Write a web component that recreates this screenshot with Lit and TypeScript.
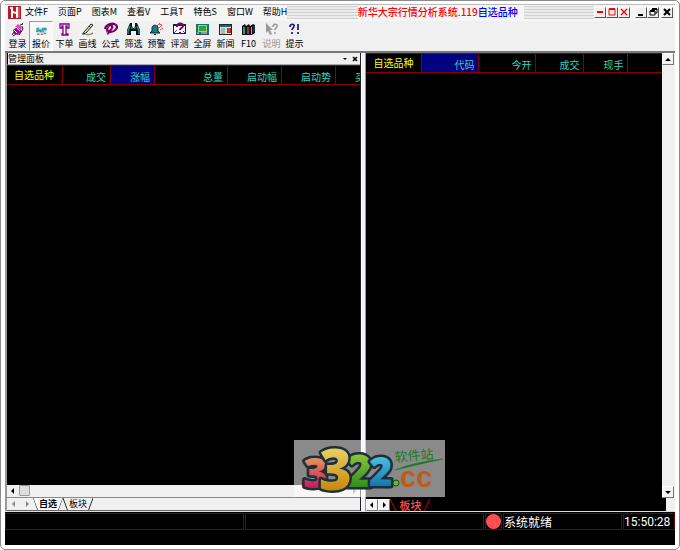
import { LitElement, html, css, svg } from "lit";
import { customElement } from "lit/decorators.js";
import { classMap } from "lit/directives/class-map.js";

interface Tool { label: string; icon: unknown; pressed?: boolean; disabled?: boolean }
interface Column { label: string; cls: string; kind?: string }

const MENUS = ["文件F", "页面P", "图表M", "查看V", "工具T", "特色S", "窗口W", "帮助H"];

const TOOLS: Tool[] = [
  { label: "登录", icon: svg`<path d="M2 13l2-3M11 3l2-2M3 14l3-2M10 3l3-1" stroke="#222" fill="none"/><path d="M3 8l4-3 5 4-4 4-4-1z" fill="#b0009c"/><path d="M5 5l3-3 4 3-1 3z" fill="#d24cc4"/><path d="M6 5l4 4M4 8l3 3" stroke="#fff"/><path d="M12 4l1 3-4 6" stroke="#222" fill="none"/>` },
  { label: "报价", pressed: true, icon: svg`<path d="M2 5h11v8H2z" fill="#bfe4e2"/><path d="M2 5h3v2h3v-2h5v3h-3v2H6V9H2z" fill="#2fb4b4"/><path d="M2 9h2M5 8l2 1M10 7l2-1M3 12h2M7 12h2M10 11h2" stroke="#e02a2a"/>` },
  { label: "下单", icon: svg`<path d="M3 2h9v4h-2V4H9v8h2v1H5v-1h1V4H5v2H3z" fill="#fff" stroke="#860086" stroke-width="1.3"/>` },
  { label: "画线", icon: svg`<path d="M4 10L11 2l2 1-7 8-3 1z" fill="#e6dcae" stroke="#222"/><path d="M9 4l2 2" stroke="#222"/><path d="M2 12c4-1 5 3 11-1" stroke="#303090" fill="none"/><path d="M5 12h6" stroke="#d8d040"/>` },
  { label: "公式", icon: svg`<path d="M2 7c1-5 8-7 11-4s-2 7-5 7-5-2-3-5 5-2 4 1-3 2-4 6" fill="none" stroke="#7a0064" stroke-width="2.2"/><path d="M3 8l2 5M3 6l3-2" stroke="#b0308c"/>` },
  { label: "筛选", icon: svg`<path d="M4 1h2v3l1 2h1l1-2V1h2l3 7v5h-4V9H5v4H1V8z" fill="#111"/><path d="M4 4L2 9v3M11 4l2 5v3M6 5v2M9 5v2" stroke="#18a0a0" stroke-width="1.3" fill="none"/>` },
  { label: "预警", icon: svg`<path d="M1 11l2-2V6c0-3 4-4 6-1v4l2 2z" fill="#148080" stroke="#123"/><path d="M5 12h2v1H5z" fill="#111"/><path d="M8 4l3-3M10 6l3-3M11 8l3-2M10 2l3 1" stroke="#e44"/>` },
  { label: "评测", icon: svg`<path d="M1 2h13v10H1z" fill="#222"/><path d="M2 4h11v7H2z" fill="#fff"/><path d="M5 5c0-5 7-4 6-1 0 2-3 2-3 4M8 10v2" stroke="#7a0078" stroke-width="2" fill="none"/><path d="M2 11l3-3M11 9l2 2" stroke="#34a"/>` },
  { label: "全屏", icon: svg`<path d="M1 2h13v10H1z" fill="#087878"/><path d="M3 3h9v7H3z" fill="#c9c45a"/><path d="M4 4h7v5H4z" fill="#24a552"/><path d="M2 11h2M6 11h6" stroke="#ddd"/><path d="M1 12h13v1H1z" fill="#444"/>` },
  { label: "新闻", icon: svg`<path d="M1 2h13v11H1z" fill="#222"/><path d="M2 5h11v7H2z" fill="#ddd"/><path d="M2 3h11v2H2z" fill="#087070"/><path d="M9 6h4v5H9z" fill="#b22"/><path d="M3 7h4M3 9h4M3 11h4M10 7h2M10 9h2" stroke="#888"/>` },
  { label: "F10", icon: svg`<path d="M1 4l3-2 1 2 3-2 1 2 3-2 2 1v8l-3 2H1z" fill="#111"/><path d="M2 5h2v7H2z" fill="#1a9a9a"/><path d="M6 5h2v7H6z" fill="#b03020"/><path d="M10 5h1v7h-1z" fill="#c9b52c"/><path d="M13 4v6" stroke="#249"/>` },
  { label: "说明", disabled: true, icon: svg`<path d="M2 1v10l2-2 2 4 2-1-2-4h3z" fill="#999"/><path d="M9 5c0-4 5-3 4-1 0 2-2 2-2 4M11 10v2" stroke="#999" stroke-width="1.5" fill="none"/>` },
  { label: "提示", icon: svg`<path d="M3 5c0-4 5-3 4-1 0 2-2 2-2 4M5 10v2M11 2v6M11 10v2" stroke="#14148c" stroke-width="1.7" fill="none"/>` },
];

const LEFT: Column[] = [
  { label: "自选品种", cls: "w56", kind: "name" },
  { label: "成交", cls: "w48" },
  { label: "涨幅", cls: "w44", kind: "sorted" },
  { label: "总量", cls: "w73" },
  { label: "启动幅", cls: "w54" },
  { label: "启动势", cls: "w54" },
  { label: "买入", cls: "w44" },
];

const RIGHT: Column[] = [
  { label: "自选品种", cls: "w56", kind: "name" },
  { label: "代码", cls: "w57", kind: "sorted" },
  { label: "今开", cls: "w57" },
  { label: "成交", cls: "w48" },
  { label: "现手", cls: "w44" },
];

const GLYPHS = {
  min: svg`<path d="M2 8h5" stroke="currentColor" stroke-width="2"/>`,
  max: svg`<path d="M2 2h6v6H2z" fill="none" stroke="currentColor"/><path d="M2 2h6" stroke="currentColor" stroke-width="2"/>`,
  restore: svg`<path d="M4 4V2h5v4H7M2 4h5v4H2z" fill="none" stroke="currentColor"/><path d="M4 2h5M2 4h5" stroke="currentColor" stroke-width="2"/>`,
  close: svg`<path d="M2 2l6 6M8 2l-6 6" stroke="currentColor" stroke-width="2"/>`,
  shut: svg`<path d="M3 3l4 4M7 3l-4 4" stroke="currentColor" stroke-width="1.6"/>`,
  bar: svg`<path d="M2 5h6" stroke="currentColor" stroke-width="2"/>`,
  thin: svg`<path d="M2 2l6 6M8 2l-6 6" stroke="currentColor" stroke-width="1.4"/>`,
  left: svg`<path d="M6 2v6L3 5z" fill="currentColor"/>`,
  right: svg`<path d="M4 2v6l3-3z" fill="currentColor"/>`,
  up: svg`<path d="M2 7h6L5 4z" fill="currentColor"/>`,
  down: svg`<path d="M2 4h6L5 7z" fill="currentColor"/>`,
  drop: svg`<path d="M3 4h4L5 6z" fill="currentColor"/>`,
};

@customElement("app-root")
export class AppRoot extends LitElement {
  static styles = css`
    :host {
      display: block;
      height: 100vh;
      font-family: "Liberation Sans", "Noto Sans CJK SC", sans-serif;
      font-size: 9px;
      color: #000;
    }
    * { box-sizing: border-box; }
    button {
      font: inherit;
      color: inherit;
      background: none;
      border: 0;
      padding: 0;
      margin: 0;
      white-space: nowrap;
      display: flex;
      align-items: center;
      justify-content: center;
    }
    .window {
      height: 100%;
      display: flex;
      flex-direction: column;
      padding: 3px 4px 4px;
      border: 1px solid #8c8c8c;
      border-radius: 5px;
      background: #fff;
    }
    .menubar {
      display: flex;
      align-items: center;
      height: 17px;
      background: #f6f6f6;
      border-top: 1px solid #bbb;
      padding: 0 2px 2px 3px;
    }
    .logo { width: 13px; height: 13px; flex: none; }
    .menus { display: flex; gap: 10px; padding-left: 4px; font-family: "Noto Sans CJK SC", sans-serif; line-height: 12px; }
    .hatch {
      flex: 1;
      height: 13px;
      background: repeating-linear-gradient(#d2d2d2 0 1px, #ececec 1px 3px);
    }
    .title { margin: 0; padding-right: 6px; font: 500 10px/12px "Noto Sans CJK SC", sans-serif; color: #f00; white-space: nowrap; }
    .title span { color: #00f; }
    .boxes { display: flex; }
    .boxes.system { color: #f00; margin-right: 5px; }
    .box {
      width: 12px;
      height: 11px;
      background: #f0f0f0;
      border: 1px solid;
      border-color: #fff #555 #555 #fff;
    }
    .box svg, .arrow svg { width: 10px; height: 10px; flex: none; display: block; }
    .last { margin-left: 2px; }
    .toolbar {
      display: flex;
      height: 30px;
      background: #f0f0f0;
      padding-left: 1px;
      font-family: "Noto Sans CJK SC", sans-serif;
    }
    .tool { flex: none; width: 23px; flex-direction: column; justify-content: flex-start; padding-top: 1px; line-height: 13px; }
    .tool svg { width: 15px; height: 15px; display: block; }
    .tool.pressed { width: 24px; border: 1px solid; border-color: #999 #fff #fff #999; background: #f8f8f8; }
    .tool.disabled { color: #999; }
    .work {
      position: relative;
      flex: 1;
      min-height: 0;
      display: grid;
      grid-template-columns: minmax(0, 357fr) 5px minmax(0, 309fr);
      border-top: 2px solid #777;
      border-bottom: 1px solid #ddd;
    }
    .pane { min-width: 0; min-height: 0; display: flex; flex-direction: column; background: #f0f0f0; }
    .left { border-left: 2px solid #999; border-right: 1px solid #222; }
    .splitter { background: #f0f3fa; border-left: 1px solid #fff; border-right: 1px solid #999; }
    .caption { display: flex; align-items: center; height: 12px; border-bottom: 1px solid #aaa; border-left: 1px solid #000; font-family: "Noto Sans CJK SC", sans-serif; }
    .caption h2 { flex: 1; margin: 0; font-size: 9px; font-weight: 400; line-height: 11px; }
    .arrow { width: 12px; height: 12px; flex: none; }
    .caption .arrow { width: 10px; height: 11px; }
    .quotes { flex: 1; min-height: 0; overflow: hidden; background: #000; border-top: 1px solid #800; }
    table { table-layout: fixed; width: 100%; border-collapse: separate; border-spacing: 0; }
    .quotes.wide table { width: 373px; }
    th {
      height: 19px;
      padding: 3px 4px 0 0;
      border-right: 1px solid #800;
      border-bottom: 1px solid #800;
      font: 400 10px/14px "Noto Sans CJK SC", sans-serif;
      color: #34d6bc;
      text-align: right;
      white-space: nowrap;
      overflow: hidden;
    }
    th.name { color: #ff0; padding: 0 8px 1px 0; }
    th.sorted { background: #000080; }
    th.rest { border-right: 0; }
    .w44 { width: 44px; } .w48 { width: 48px; } .w54 { width: 54px; }
    .w56 { width: 56px; } .w57 { width: 57px; } .w73 { width: 73px; }
    .hscroll { display: flex; height: 13px; border-bottom: 1px solid #888; background: #f0f0f0; }
    .thumb { width: 11px; height: 11px; background: #ddd; border: 1px solid #999; border-radius: 1px; }
    .grow { flex: 1; }
    .tabs { display: flex; align-items: center; height: 13px; border-bottom: 1px solid #666; }
    .muted { color: #888; }
    .left .tabs .arrow { width: 13px; }
    .tab { position: relative; height: 12px; padding: 0 6px; font-family: "Noto Sans CJK SC", sans-serif; line-height: 12px; }
    .slants { position: absolute; inset: 0; width: 100%; height: 100%; }
    .tab.active { background: #fff; font-weight: 700; clip-path: polygon(0 0, 100% 0, 86% 100%, 14% 100%); }
    .rightbody { flex: 1; min-height: 0; display: flex; }
    .vscroll { width: 13px; display: flex; flex-direction: column; justify-content: space-between; background: #f0f0f0; }
    .raised { background: #f4f4f4; border: 1px solid; border-color: #fff #777 #777 #fff; }
    .dark { background: #000; margin-right: 9px; border-bottom: 0; }
    .dark .tab { color: #ff5050; font-size: 11px; font-weight: 500; padding: 0 9px; }
    .watermark { position: absolute; left: calc(43% + 1px); bottom: 14px; width: 151px; height: 57px; background: rgba(255, 255, 255, 0.54); }
    .watermark svg { display: block; width: 100%; height: 100%; }
    .digit { font-family: "Open Sans", sans-serif; font-weight: 800; stroke: #1c2f3a; stroke-width: 5px; stroke-linejoin: round; paint-order: stroke; }
    .d1 { font-size: 42px; fill: url(#pink); }
    .d2 { font-size: 56px; fill: url(#gold); }
    .d3 { font-size: 45px; fill: url(#green); }
    .d4 { font-size: 40px; fill: url(#blue); }
    .cc { font: 700 29px "Liberation Sans", sans-serif; fill: #c05a14; }
    .site { font: 13px "Noto Sans CJK SC", sans-serif; fill: #1c7a1c; }
    .status {
      display: grid;
      grid-template-columns: minmax(0, 239fr) minmax(0, 239fr) 17px minmax(0, 119fr) 52px;
      gap: 1px;
      height: 33px;
      padding: 1px 0 15px;
      background: #000;
      color: #fff;
      font: 12px/15px "Noto Sans CJK SC", sans-serif;
    }
    .cell { border: 1px solid #700; white-space: nowrap; overflow: hidden; }
    .time { font-family: Roboto, sans-serif; line-height: 17px; }
    .lamp { width: 15px; height: 15px; border-radius: 50%; background: #ff5050; }
  `;

  private glyph(name: keyof typeof GLYPHS) {
    return html`<svg viewBox="0 0 10 10" aria-hidden="true">${GLYPHS[name]}</svg>`;
  }

  private box(name: keyof typeof GLYPHS, label: string, last = false) {
    return html`<button class=${classMap({ box: true, last })} aria-label=${label}>${this.glyph(name)}</button>`;
  }

  private arrow(name: keyof typeof GLYPHS, label: string, extra = "") {
    return html`<button class="arrow ${extra}" aria-label=${label}>${this.glyph(name)}</button>`;
  }

  private head(columns: Column[], rest = false) {
    return html`<table><thead><tr>
      ${columns.map((c) => html`<th scope="col" class="${c.cls} ${c.kind ?? ""}">${c.label}</th>`)}
      ${rest ? html`<th class="rest"></th>` : ""}
    </tr></thead></table>`;
  }

  private tab(label: string, color: string, active = false) {
    return html`<button class=${classMap({ tab: true, active })}>
      <svg class="slants" viewBox="0 0 34 12" preserveAspectRatio="none" aria-hidden="true"><path d="M0 0l5 12M34 0l-5 12" stroke=${color} fill="none"/></svg>${label}
    </button>`;
  }

  private gradient(id: string, from: string, to: string) {
    return svg`<linearGradient id=${id} x1="0" y1="0" x2="0" y2="1"><stop offset="0.25" stop-color=${from}/><stop offset="0.8" stop-color=${to}/></linearGradient>`;
  }

  render() {
    return html`
      <div class="window">
        <nav class="menubar">
          <svg class="logo" viewBox="0 0 13 13" aria-hidden="true"><path d="M0 0h13v13H0z" fill="#b81c22"/><path d="M2 1h3v4l3 1V1h2v11H8V8L5 7v5H3V3H2z" fill="#fff"/><path d="M11 1v11" stroke="#e88"/></svg>
          <div class="menus">${MENUS.map((m) => html`<button>${m}</button>`)}</div>
          <div class="hatch"></div>
          <h1 class="title">新华大宗行情分析系统.119<span>自选品种</span></h1>
          <div class="hatch"></div>
          <div class="boxes system">${this.box("bar", "最小化")}${this.box("max", "最大化")}${this.box("thin", "关闭")}</div>
          <div class="boxes">${this.box("min", "最小化页面")}${this.box("restore", "还原页面")}${this.box("close", "关闭页面", true)}</div>
        </nav>
        <div class="toolbar">
          ${TOOLS.map((t) => html`<button class=${classMap({ tool: true, pressed: !!t.pressed, disabled: !!t.disabled })} ?disabled=${t.disabled}>
            <svg viewBox="0 0 15 15" aria-hidden="true">${t.icon}</svg>${t.label}</button>`)}
        </div>
        <main class="work">
          <section class="pane left">
            <div class="caption"><h2>管理面板</h2>${this.arrow("drop", "菜单")}${this.arrow("shut", "关闭面板")}</div>
            <div class="quotes wide">${this.head(LEFT)}</div>
            <div class="hscroll">${this.arrow("left", "向左")}<div class="thumb"></div><div class="grow"></div>${this.arrow("right", "向右", "muted")}</div>
            <div class="tabs">${this.arrow("left", "上一页", "muted")}${this.arrow("right", "下一页", "muted")}${this.tab("自选", "#222", true)}${this.tab("板块", "#222")}</div>
          </section>
          <div class="splitter"></div>
          <section class="pane">
            <div class="rightbody">
              <div class="quotes">${this.head(RIGHT, true)}</div>
              <div class="vscroll">${this.arrow("up", "向上", "raised")}${this.arrow("down", "向下", "raised")}</div>
            </div>
            <div class="tabs dark">${this.arrow("left", "上一页", "raised")}${this.arrow("right", "下一页", "raised")}${this.tab("板块", "#a00")}</div>
          </section>
          <div class="watermark">
            <svg viewBox="0 0 151 57">
              <defs>
                ${this.gradient("pink", "#e8965a", "#c2185b")}
                ${this.gradient("gold", "#e8cf62", "#c8860c")}
                ${this.gradient("green", "#8cc63c", "#2e8b1c")}
                ${this.gradient("blue", "#4cc0e0", "#1474a8")}
              </defs>
              <text class="digit d1" x="9" y="48">3</text>
              <text class="digit d3" x="52" y="47">2</text>
              <text class="digit d4" x="75" y="46">2</text>
              <text class="digit d2" x="25" y="50">3</text>
              <circle cx="102" cy="43" r="3" fill="#6ab82c" stroke="#1c4a1c"/>
              <text class="cc" x="106" y="47">cc</text>
              <text class="site" x="101" y="22" transform="rotate(-5 101 22)">软件站</text>
              <path d="M101 30Q120 22 149 19Q122 25 101 30z" fill="#1c7a1c" stroke="#1c7a1c" stroke-width="0.6"/>
            </svg>
          </div>
        </main>
        <footer class="status">
          <div class="cell"></div><div class="cell"></div>
          <div class="cell"><div class="lamp"></div></div>
          <div class="cell">系统就绪</div>
          <div class="cell time">15:50:28</div>
        </footer>
      </div>`;
  }
}
